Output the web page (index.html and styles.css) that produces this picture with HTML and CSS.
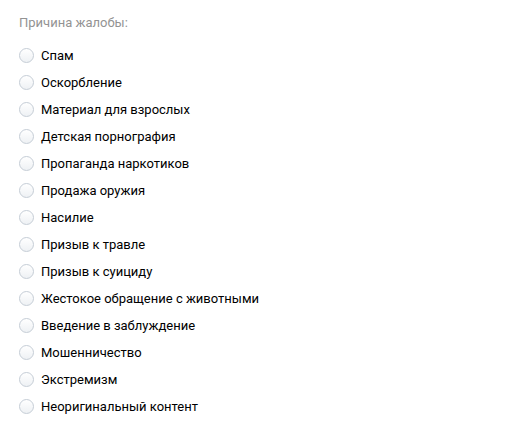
FILE: index.html
```html
<!DOCTYPE html>
<html lang="ru">
<head>
  <meta charset="UTF-8" />
  <title>Причина жалобы</title>
  <link rel="stylesheet" href="styles.css">
</head>
<body>
  <div class="report">
    <div class="report-title">Причина жалобы:</div>
    <div class="reasons">
      <label class="reason"><span class="radio"></span>Спам</label>
      <label class="reason"><span class="radio"></span>Оскорбление</label>
      <label class="reason"><span class="radio"></span>Материал для взрослых</label>
      <label class="reason"><span class="radio"></span>Детская порнография</label>
      <label class="reason"><span class="radio"></span>Пропаганда наркотиков</label>
      <label class="reason"><span class="radio"></span>Продажа оружия</label>
      <label class="reason"><span class="radio"></span>Насилие</label>
      <label class="reason"><span class="radio"></span>Призыв к травле</label>
      <label class="reason"><span class="radio"></span>Призыв к суициду</label>
      <label class="reason"><span class="radio"></span>Жестокое обращение с животными</label>
      <label class="reason"><span class="radio"></span>Введение в заблуждение</label>
      <label class="reason"><span class="radio"></span>Мошенничество</label>
      <label class="reason"><span class="radio"></span>Экстремизм</label>
      <label class="reason"><span class="radio"></span>Неоригинальный контент</label>
    </div>
  </div>
</body>
</html>
```

FILE: styles.css
```css
body {
  margin: 0;
  background-color: #fff;
  font-family: Roboto, "Open Sans", sans-serif;
  font-size: 13px;
  color: #000;
}

.report {
  padding: 15px 19px;
}

.report-title {
  color: #939393;
  line-height: 16px;
  margin-bottom: 11px;
}

.reasons {
  display: flex;
  flex-direction: column;
}

.reason {
  display: flex;
  align-items: center;
  height: 27px;
  cursor: pointer;
}

.radio {
  width: 13px;
  height: 13px;
  border: 1px solid #c5cdd6;
  border-radius: 50%;
  background: linear-gradient(#fff, #eef1f4);
  margin-right: 7px;
  flex-shrink: 0;
}
```
